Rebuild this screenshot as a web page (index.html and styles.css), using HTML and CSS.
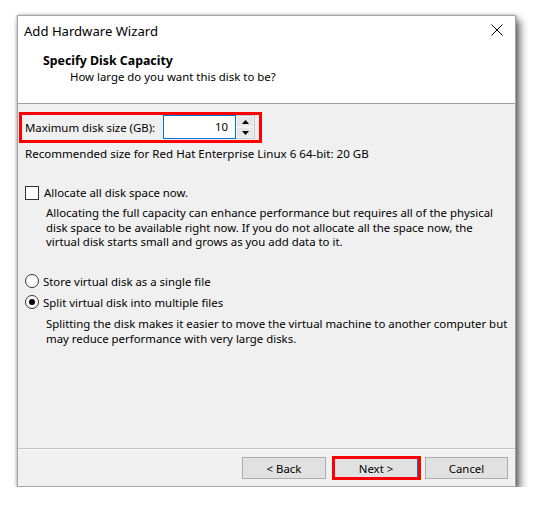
FILE: index.html
```html
<!DOCTYPE html>
<html lang="en">
<head>
<meta charset="utf-8">
<title>Add Hardware Wizard</title>
<link rel="stylesheet" href="styles.css">
</head>
<body>
<div class="window">
  <div class="titlebar">
    <span class="title">Add Hardware Wizard</span>
    <svg class="close" width="12" height="12" viewBox="0 0 12 12"><path d="M0.5 0.5L11.5 11.5M11.5 0.5L0.5 11.5" stroke="#000" stroke-width="1" fill="none"/></svg>
  </div>
  <div class="header">
    <div class="h-title">Specify Disk Capacity</div>
    <div class="h-sub">How large do you want this disk to be?</div>
  </div>
  <div class="content">
    <div class="size-row">
      <span class="size-label">Maximum disk size (GB):</span>
      <span class="size-input">10</span>
      <span class="spinner">
        <span class="spin-btn"><svg width="7" height="4" viewBox="0 0 7 4"><path d="M3.5 0L7 4H0Z" fill="#000"/></svg></span>
        <span class="spin-btn"><svg width="7" height="4" viewBox="0 0 7 4"><path d="M0 0H7L3.5 4Z" fill="#000"/></svg></span>
      </span>
    </div>
    <div class="recommend">Recommended size for Red Hat Enterprise Linux 6 64-bit: 20 GB</div>
    <div class="option check-row"><span class="checkbox"></span><span>Allocate all disk space now.</span></div>
    <p class="desc desc-1">Allocating the full capacity can enhance performance but requires all of the physical<br>disk space to be available right now. If you do not allocate all the space now, the<br>virtual disk starts small and grows as you add data to it.</p>
    <div class="option radio-row first"><span class="radio"></span><span>Store virtual disk as a single file</span></div>
    <div class="option radio-row second"><span class="radio checked"></span><span>Split virtual disk into multiple files</span></div>
    <p class="desc desc-2">Splitting the disk makes it easier to move the virtual machine to another computer but<br>may reduce performance with very large disks.</p>
  </div>
  <div class="footer">
    <button class="btn btn-back">&lt; Back</button>
    <button class="btn btn-next">Next &gt;</button>
    <button class="btn btn-cancel">Cancel</button>
  </div>
</div>
</body>
</html>
```
FILE: styles.css
```css
* { box-sizing: border-box; }
html, body { margin: 0; padding: 0; background: #fff; }
body {
  font-family: "Noto Sans", "Open Sans", sans-serif;
  font-size: 11.4px;
  color: #000;
}
.window {
  margin: 15px 0 0 17px;
  width: 499px;
  height: 472px;
  border: 1px solid #a6a6a6;
  background: #f0f0f0;
  display: flex;
  flex-direction: column;
  box-shadow: 0 0 3px rgba(0,0,0,0.3), 4px 5px 8px rgba(0,0,0,0.6);
}
.titlebar {
  height: 31px;
  background: #fff;
  display: flex;
  align-items: center;
  justify-content: space-between;
  padding: 0 12px 0 6px;
}
.title {
  font-size: 13.1px;
  line-height: 30px;
  margin-top: -1px;
}
.close { display: block; margin-top: -3px; }
.header {
  height: 57px;
  background: #fff;
  border-bottom: 1px solid #a0a0a0;
  padding-top: 6px;
}
.h-title {
  font-weight: 700;
  font-size: 12.35px;
  line-height: 16px;
  padding-left: 25px;
}
.h-sub {
  line-height: 16px;
  padding-left: 52px;
}
.content {
  flex: 1;
  padding: 8px 0 0 7px;
}
.size-row {
  display: inline-flex;
  align-items: flex-start;
  margin-left: -6px;
  border: 3px solid #ff0000;
  padding: 0 4px 0 3px;
  height: 31px;
}
.size-label {
  width: 138px;
  line-height: 25px;
}
.size-input {
  width: 73px;
  height: 24px;
  border: 1px solid #0078d7;
  background: #fff;
  text-align: right;
  padding-right: 7px;
  line-height: 21px;
}
.spinner {
  width: 19px;
  height: 24px;
  display: flex;
  flex-direction: column;
  border: 1px solid #c4c4c4;
  border-left: none;
  background: #fff;
}
.spin-btn {
  flex: 1;
  display: flex;
  align-items: center;
  justify-content: center;
  background: #e6e6e6;
  border: 1px solid #f4f4f4;
}
.spin-btn svg { display: block; }
.recommend {
  margin-top: 3px;
  line-height: 15px;
  font-size: 11.55px;
}
.option {
  display: flex;
  align-items: center;
  line-height: 15px;
  height: 15px;
}
.check-row { margin-top: 24px; }
.checkbox {
  width: 14px;
  height: 14px;
  border: 1px solid #333;
  background: #fff;
  margin-right: 5px;
  flex: none;
}
.desc {
  margin: 0 0 0 21px;
  line-height: 14.5px;
  white-space: nowrap;
}
.desc-1 { margin-top: 6px; }
.radio-row.first { margin-top: 24px; }
.radio-row.second { margin-top: 6px; }
.radio {
  width: 14px;
  height: 14px;
  border: 1px solid #333;
  border-radius: 50%;
  background: #fff;
  margin-right: 4px;
  flex: none;
  display: flex;
  align-items: center;
  justify-content: center;
}
.radio.checked::before {
  content: "";
  width: 6px;
  height: 6px;
  border-radius: 50%;
  background: #000;
}
.desc-2 { margin-top: 6px; line-height: 15px; }
.footer {
  height: 38px;
  border-top: 1px solid #c2c2c2;
  box-shadow: inset 0 1px 0 #fbfbfb;
  display: flex;
  justify-content: flex-end;
  align-items: flex-start;
  padding: 8px 7px 0 0;
}
.btn {
  font-family: inherit;
  font-size: 11.4px;
  color: #000;
  height: 22px;
  width: 84px;
  background: #e1e1e1;
  border: 1px solid #adadad;
  padding: 0;
  line-height: 19px;
}
.btn-next {
  margin-left: 8px;
  border-color: #0078d7;
  position: relative;
}
.btn-next::after {
  content: "";
  position: absolute;
  top: -2px;
  bottom: -2px;
  left: -3px;
  right: -4px;
  border: 3px solid #ff0000;
}
.btn-cancel {
  margin-left: 7px;
  width: 83px;
}
```
